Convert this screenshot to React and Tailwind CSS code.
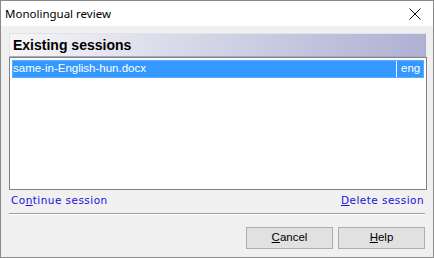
export default function App() {
  return (
    <div className="w-[434px] h-[258px] border border-[#8a8a8a] bg-[#f0f0f0] flex flex-col overflow-hidden" style={{ fontFamily: '"Liberation Sans", Arial, sans-serif' }}>
      {/* title bar */}
      <div className="h-[25px] bg-white flex items-center justify-between pl-[4px] pr-[12px] shrink-0">
        <span className="text-[11.5px] text-black leading-none" style={{ fontFamily: '"Noto Sans", "Liberation Sans", sans-serif' }}>Monolingual review</span>
        <svg width="12" height="12" viewBox="0 0 12 12" className="mt-[1px]">
          <path d="M0.5 0.5 L11.5 11.5 M11.5 0.5 L0.5 11.5" stroke="#111" strokeWidth="1" />
        </svg>
      </div>

      <div className="flex-1 flex flex-col pl-[8px] pt-[7px]">
        {/* header panel */}
        <div className="w-[417px] h-[24px] flex items-center pl-[3px] border border-[#e2e2ea] border-r-[#a8aac8] border-b-[#a8aac8] bg-gradient-to-r from-[#f6f6f8] to-[#aeb1d2]">
          <span className="text-[14px] font-bold text-black leading-none">Existing sessions</span>
        </div>

        {/* list box */}
        <div className="w-[418px] h-[133px] border border-[#828282] bg-white p-[2px]">
          <div className="h-[18px] flex bg-[#3399ff] border border-[#5aaeff] text-white text-[11.5px]">
            <div className="flex-1 flex items-center leading-none">same-in-English-hun.docx</div>
            <div className="w-[27px] border-l border-white flex items-center pl-[4px] leading-none">eng</div>
          </div>
        </div>

        {/* links */}
        <div className="w-[416px] flex justify-between items-center h-[22px] pl-[2px] pr-[1px] text-[10.5px] tracking-[0.45px] text-[#1a10d8]" style={{ fontFamily: '"DejaVu Sans", Verdana, sans-serif' }}>
          <span>Co<span className="underline">n</span>tinue session</span>
          <span><span className="underline">D</span>elete session</span>
        </div>

        <div className="w-[416px] h-[2px] mt-[1px] border-t border-[#a0a0a0] border-b border-b-white" />

        {/* buttons */}
        <div className="w-[416px] flex justify-end gap-[5px] mt-[12px]">
          <button className="w-[87px] h-[22px] bg-[#e1e1e1] border border-[#adadad] text-[11.5px] text-black leading-none">
            <span className="underline">C</span>ancel
          </button>
          <button className="w-[87px] h-[22px] bg-[#e1e1e1] border border-[#adadad] text-[11.5px] text-black leading-none">
            <span className="underline">H</span>elp
          </button>
        </div>
      </div>
    </div>
  );
}
